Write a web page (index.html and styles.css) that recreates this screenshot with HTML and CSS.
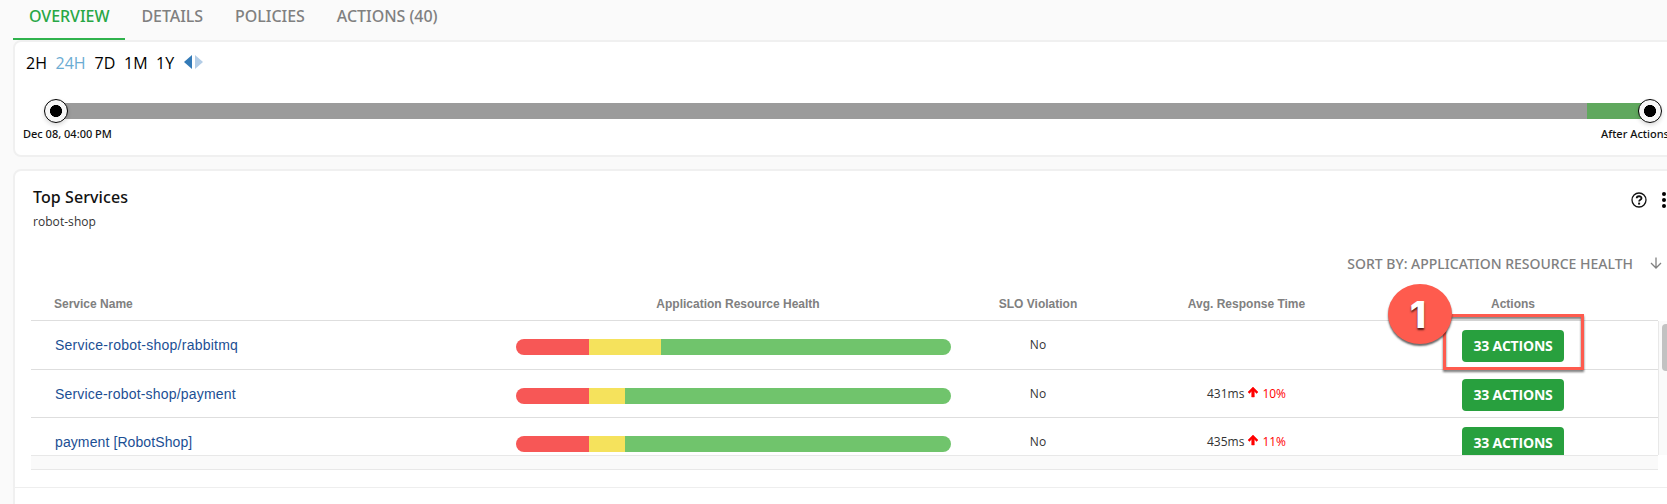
FILE: index.html
```html
<!DOCTYPE html>
<html lang="en">
<head>
<meta charset="utf-8">
<title>Top Services</title>
<link rel="stylesheet" href="styles.css">
</head>
<body>
<nav class="tabs">
  <a class="tab active">OVERVIEW</a>
  <a class="tab">DETAILS</a>
  <a class="tab">POLICIES</a>
  <a class="tab">ACTIONS (40)</a>
</nav>

<section class="card timeline">
  <div class="ranges">
    <span class="r2h">2H</span><span class="selected">24H</span><span class="r7d">7D</span><span class="r1m">1M</span><span class="r1y">1Y</span>
    <svg class="steps" width="20" height="14" viewBox="0 0 20 14"><path d="M8 0v14L0 7z" fill="#337ab7"/><path d="M11 0v14l8-7z" fill="#b3cde6"/></svg>
  </div>
  <div class="track">
    <span class="knob"></span>
    <div class="past"></div>
    <div class="future"></div>
    <span class="knob"></span>
  </div>
  <div class="labels"><span>Dec 08, 04:00 PM</span><span class="after">After Actions</span></div>
</section>

<section class="card services">
  <header class="card-head">
    <div>
      <h2>Top Services</h2>
      <p>robot-shop</p>
    </div>
    <div class="tools">
      <svg width="16" height="16" viewBox="0 0 16 16" fill="none" stroke="#111"><circle cx="8" cy="8" r="7" stroke-width="1.3"/><path d="M5.7 6.3C5.7 3.6 10.5 3.6 10.5 6.2C10.5 7.8 8.1 7.8 8.1 9.5" stroke-width="1.8"/><path d="M8.1 10.6v2" stroke-width="2"/></svg>
      <svg width="4" height="16" viewBox="0 0 4 16" fill="#000"><circle cx="2" cy="2" r="2"/><circle cx="2" cy="8" r="2"/><circle cx="2" cy="14" r="2"/></svg>
    </div>
  </header>
  <div class="sort">
    <span>SORT BY: APPLICATION RESOURCE HEALTH</span>
    <svg width="12" height="12" viewBox="0 0 12 12" fill="none" stroke="#808080" stroke-width="1.3"><path d="M6 .5v10M1 6l5 5 5-5"/></svg>
  </div>
  <div class="row head">
    <span class="first">Service Name</span><span class="health-title">Application Resource Health</span><span>SLO Violation</span><span>Avg. Response Time</span><span>Actions</span>
  </div>
  <div class="viewport">
    <div class="rows">
      <div class="row tall">
        <a class="first">Service-robot-shop/rabbitmq</a>
        <div class="health"><i class="red"></i><i class="yellow wide"></i><i class="green"></i></div>
        <span class="value">No</span>
        <span class="value"></span>
        <button class="action">33 ACTIONS</button>
      </div>
      <div class="row">
        <a class="first second">Service-robot-shop/payment</a>
        <div class="health"><i class="red"></i><i class="yellow"></i><i class="green"></i></div>
        <span class="value">No</span>
        <span class="value">431ms<svg class="up" width="10" height="10" viewBox="0 0 10 10"><path d="M5 0l5 5-1.3 1.4L6.3 4.2V10H3.7V4.2L1.3 6.4 0 5z" fill="#f00" stroke="#f00" stroke-width=".5"/></svg><em>10%</em></span>
        <button class="action">33 ACTIONS</button>
      </div>
      <div class="row">
        <a class="first short">payment [RobotShop]</a>
        <div class="health"><i class="red"></i><i class="yellow"></i><i class="green"></i></div>
        <span class="value">No</span>
        <span class="value">435ms<svg class="up" width="10" height="10" viewBox="0 0 10 10"><path d="M5 0l5 5-1.3 1.4L6.3 4.2V10H3.7V4.2L1.3 6.4 0 5z" fill="#f00" stroke="#f00" stroke-width=".5"/></svg><em>11%</em></span>
        <button class="action">33 ACTIONS</button>
      </div>
    </div>
    <div class="scroll"><div class="thumb"></div></div>
  </div>
  <div class="scroll-x"></div>
  <div class="card-foot"></div>
</section>

<div class="callout-box"></div>
<div class="callout-num">1</div>
</body>
</html>
```

FILE: styles.css
```css
* { box-sizing: border-box; }
body {
  margin: 0;
  width: 1667px;
  height: 504px;
  overflow: hidden;
  position: relative;
  background: #fafafa;
  font-family: "Open Sans", "Noto Sans", sans-serif;
  color: #111;
}
.tabs { display: flex; height: 40px; padding-left: 13px; }
.tab {
  height: 40px;
  padding: 0 16px;
  line-height: 33px;
  font-family: "Noto Sans", sans-serif;
  font-size: 16px;
  font-weight: 500;
  letter-spacing: -.04px;
  color: #808080;
  white-space: nowrap;
}
.tab.active { color: #28a745; border-bottom: 2px solid #2fb24c; }

.card {
  margin-left: 13px;
  width: 1670px;
  background: #fff;
  border: 2px solid #f0f0f0;
  border-radius: 8px;
}
.timeline { height: 117px; }
.ranges {
  display: flex;
  height: 42px;
  padding: 0 0 0 11px;
  line-height: 42px;
  font-size: 16px;
  color: #000;
}
.ranges span { width: 29.5px; }
.ranges .selected { width: 39px; color: #6bacd3; }
.ranges .r7d { width: 29.5px; }
.ranges .r1m { width: 32px; }
.ranges .r1y { width: 28px; }
.steps { margin-top: 13px; }
.track {
  display: flex;
  align-items: center;
  height: 24px;
  margin: 15px 0 0 29px;
  width: 1618px;
}
.knob {
  width: 24px;
  height: 24px;
  flex: none;
  border: 1px solid #000;
  border-radius: 50%;
  background: radial-gradient(circle, #000 5.7px, #f7f7f7 6.3px);
  box-shadow: 0 2px 4px rgba(0,0,0,.15);
  z-index: 1;
}
.past { height: 16px; flex: 1; margin-left: -4px; background: #9b9b9b; }
.future { height: 16px; width: 55px; margin-right: -4px; background: #60a85e; }
.labels {
  display: flex;
  padding-left: 8px;
  font-family: "Noto Sans", sans-serif;
  font-size: 11px;
  font-weight: 500;
  line-height: 16px;
  margin-top: 3px;
  white-space: nowrap;
}
.labels span { width: 1578px; flex: none; }
.labels .after { width: auto; }

.services { margin-top: 12px; height: 360px; border-radius: 8px 8px 0 0; }
.card-head { display: flex; justify-content: space-between; height: 78px; padding: 15px 19px 0 18px; }
.card-head h2 { margin: 0; font: 500 16px/22px "Noto Sans", sans-serif; letter-spacing: .08px; }
.card-head p { margin: 5px 0 0; font-size: 12px; line-height: 18px; color: #333; letter-spacing: .05px; }
.tools { display: flex; gap: 15px; padding-top: 6px; margin-right: -4px; }
.sort {
  display: flex;
  align-items: center;
  justify-content: flex-end;
  height: 29px;
  padding: 0 19px 0 0;
  gap: 17px;
  font-family: "Noto Sans", sans-serif;
  font-size: 14px;
  font-weight: 500;
  color: #808080;
}
.sort svg { margin-top: -2px; }
.row {
  display: grid;
  grid-template-columns: 485px 435px 174px 243px 290px;
  height: 48px;
  border-bottom: 1px solid #dedede;
  justify-items: center;
}
.row.tall { height: 49px; }
.row .first { justify-self: start; padding-left: 24px; }
.head {
  height: 43px;
  margin-left: 16px;
  width: 1627px;
  line-height: 52px;
  font-family: "Liberation Sans", Arial, sans-serif;
  font-size: 12px;
  font-weight: bold;
  color: #808080;
}
.head .first { padding-left: 23px; }
.health-title { padding-left: 9px; }
.viewport { display: flex; height: 134px; margin-left: 16px; overflow: hidden; }
.rows { width: 1627px; flex: none; }
a.first { font: 14px/48px "Liberation Sans", Arial, sans-serif; letter-spacing: .24px; color: #1c4f94; }
a.second { letter-spacing: .19px; }
a.short { letter-spacing: .1px; }
.health { display: flex; width: 435px; height: 16px; margin-top: 18px; border-radius: 8px; overflow: hidden; }
.red { width: 73px; background: #f75756; }
.yellow { width: 36px; background: #f5e25c; }
.yellow.wide { width: 72px; }
.green { flex: 1; background: #70c46c; }
.value { display: flex; font-size: 12px; line-height: 48px; color: #333; }
.value em { color: #f00; font-style: normal; }
.up { margin: 17px 4px 0; overflow: visible; }
.action {
  width: 102px;
  height: 32px;
  margin-top: 9px;
  padding: 0;
  border: 0;
  border-radius: 4px;
  background: #28a03e;
  color: #fff;
  font: 700 14px/32px "Open Sans", sans-serif;
  letter-spacing: -.2px;
}
.scroll { width: 20px; height: 134px; background: #fafafa; border-left: 1px solid #e8e8e8; }
.thumb { width: 16px; height: 47px; margin: 3px 0 0 3px; border-radius: 4px; background: #c2c2c2; }
.scroll-x { width: 1627px; height: 15px; margin-left: 16px; background: #fafafa; border: solid #e8e8e8; border-width: 1px 0; }
.card-foot { height: 18px; border-bottom: 1px solid #eee; }

.callout-box {
  position: absolute;
  left: 1443px;
  top: 314px;
  width: 141px;
  height: 56px;
  border: 3px solid #fe5b4e;
  filter: drop-shadow(0 2px 1px rgba(0,0,0,.55));
}
.callout-num {
  position: absolute;
  left: 1388px;
  top: 284px;
  width: 64px;
  height: 60px;
  border-radius: 50%;
  background: #fe5b4e;
  box-shadow: 0 2px 2px rgba(0,0,0,.6);
  color: #fff;
  font: 800 37px/62px Inter, Arial, sans-serif;
  text-align: center;
  text-indent: -4px;
  text-shadow: 0 2px 2px rgba(0,0,0,.7);
}
```
